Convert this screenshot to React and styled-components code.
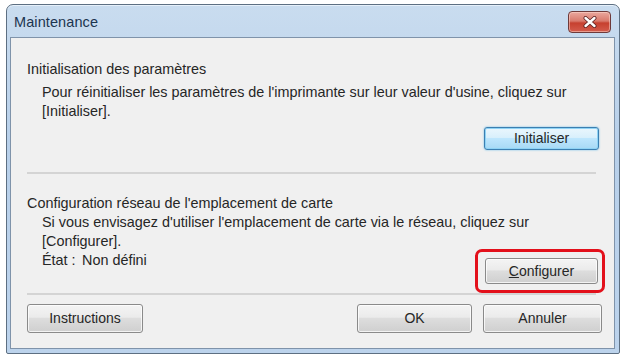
import React from 'react'
import styled, { createGlobalStyle } from 'styled-components'

const GlobalStyle = createGlobalStyle`
  html, body {
    margin: 0;
    padding: 0;
    background: #ffffff;
  }
  body {
    font-family: 'Liberation Sans', Arial, sans-serif;
  }
`

const Page = styled.div`
  width: 623px;
  height: 359px;
  padding: 4px 0 0 6px;
  box-sizing: border-box;
`

const Window = styled.div`
  width: 614px;
  height: 350px;
  box-sizing: border-box;
  display: flex;
  flex-direction: column;
  border: 1px solid #5d6f82;
  border-radius: 7px 7px 2px 2px;
  background: linear-gradient(180deg, #c9dcef 0%, #b8d0ea 40%, #bcd3ec 100%);
  padding: 0 4px 4px 3px;
  box-shadow: inset 0 1px 0 #e6f0fa;
`

const TitleBar = styled.div`
  height: 32px;
  display: flex;
  align-items: center;
  justify-content: space-between;
  padding: 0 4px 0 4px;
`

const Title = styled.div`
  font-size: 14.5px;
  color: #1c3550;
  letter-spacing: 0.1px;
  margin-top: 1px;
`

const CloseButton = styled.div`
  width: 43px;
  height: 22px;
  margin-top: 2px;
  box-sizing: border-box;
  border: 1px solid #6e3a3a;
  border-radius: 4px;
  background: linear-gradient(180deg, #eaa89e 0%, #d97a6d 45%, #c6402f 55%, #d45c4d 100%);
  box-shadow: inset 0 0 0 1px rgba(255, 220, 210, 0.5);
  display: flex;
  align-items: center;
  justify-content: center;
`

const Client = styled.div`
  flex: 1;
  background: #f0f0f0;
  border: 1px solid #7f93aa;
  padding: 22px 15px 0 16px;
  display: flex;
  flex-direction: column;
  color: #262626;
  font-size: 14.4px;
  line-height: 19px;
`

const Heading = styled.div`
  margin-top: ${p => p.$top || 0}px;
`

const Description = styled.div`
  padding-left: 15px;
  margin-top: ${p => p.$top || 0}px;
`

const Separator = styled.div`
  height: 2px;
  margin-right: 3px;
  background: #d4d4d4;
  margin-top: ${p => p.$top || 0}px;
`

const Row = styled.div`
  display: flex;
  justify-content: ${p => p.$justify || 'space-between'};
  align-items: flex-start;
  margin-top: ${p => p.$top || 0}px;
`

const Button = styled.div`
  width: ${p => p.$width || 115}px;
  height: ${p => p.$height || 26}px;
  box-sizing: border-box;
  border: 1px solid ${p => (p.$default ? '#3c7fb1' : '#8a8a8a')};
  border-radius: 3px;
  background: ${p =>
    p.$default
      ? 'linear-gradient(180deg, #eaf6fd 0%, #d9f0fc 45%, #bee6fd 50%, #a7d9f5 100%)'
      : 'linear-gradient(180deg, #f4f4f4 0%, #ebebeb 45%, #dddddd 50%, #cfcfcf 100%)'};
  box-shadow: ${p =>
    p.$default
      ? 'inset 0 0 0 1px #8fd3f5, 0 0 2px #5fb8e8'
      : 'inset 0 0 0 1px rgba(255,255,255,0.75)'};
  display: flex;
  align-items: center;
  justify-content: center;
  color: #262626;
  font-size: 14px;
`

const Underlined = styled.span`
  text-decoration: underline;
`

const Highlight = styled.div`
  position: relative;
  margin-right: 1px;
  margin-top: ${p => p.$top || 0}px;
  &::after {
    content: '';
    position: absolute;
    top: -9px;
    left: -10px;
    right: -7px;
    bottom: -9px;
    border: 3px solid #e3101b;
    border-radius: 7px;
    pointer-events: none;
  }
`

const StatusLabel = styled.span`
  display: inline-block;
  width: 40px;
`

const ButtonGroup = styled.div`
  display: flex;
  gap: 11px;
  margin-right: -3px;
`

export default function App() {
  return (
    <>
      <GlobalStyle />
      <Page>
        <Window>
          <TitleBar>
            <Title>Maintenance</Title>
            <CloseButton>
              <svg width="14" height="12" viewBox="0 0 14 12">
                <path
                  d="M2.5 2 L11.5 10 M11.5 2 L2.5 10"
                  stroke="#5a2020"
                  strokeWidth="4"
                  strokeLinecap="round"
                />
                <path
                  d="M2.5 2 L11.5 10 M11.5 2 L2.5 10"
                  stroke="#ffffff"
                  strokeWidth="2.4"
                  strokeLinecap="round"
                />
              </svg>
            </CloseButton>
          </TitleBar>
          <Client>
            <Heading>Initialisation des paramètres</Heading>
            <Description $top={4}>
              Pour réinitialiser les paramètres de l'imprimante sur leur valeur d'usine, cliquez sur
              <br />
              [Initialiser].
            </Description>
            <Row $justify="flex-end" $top={6}>
              <Button $default $height={23}>Initialiser</Button>
            </Row>
            <Separator $top={22} />
            <Heading $top={20}>Configuration réseau de l'emplacement de carte</Heading>
            <Description>
              Si vous envisagez d'utiliser l'emplacement de carte via le réseau, cliquez sur
              <br />
              [Configurer].
            </Description>
            <Row>
              <Description>
                <StatusLabel>État :</StatusLabel>Non défini
              </Description>
              <Highlight $top={7}>
                <Button $width={113}>
                  <span>
                    <Underlined>C</Underlined>onfigurer
                  </span>
                </Button>
              </Highlight>
            </Row>
            <Separator $top={9} />
            <Row $top={9}>
              <Button $height={29} $width={116}>Instructions</Button>
              <ButtonGroup>
                <Button $height={29}>OK</Button>
                <Button $height={29} $width={119}>Annuler</Button>
              </ButtonGroup>
            </Row>
          </Client>
        </Window>
      </Page>
    </>
  )
}
